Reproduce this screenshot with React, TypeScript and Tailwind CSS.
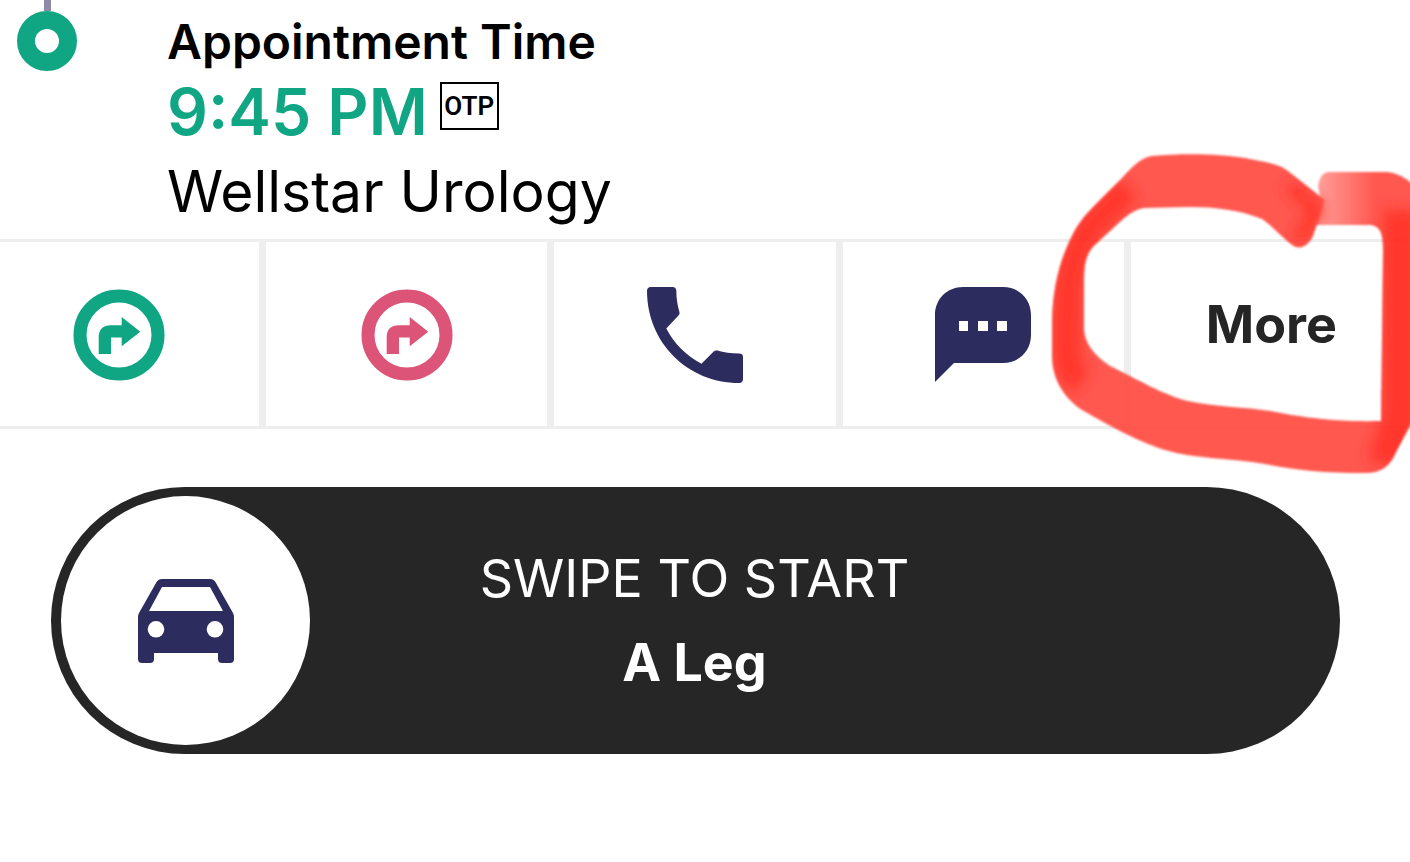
import { FC, ReactNode } from "react";

interface DirectionIconProps {
    className: string;
}

const DirectionIcon: FC<DirectionIconProps> = ({ className }) => {
    return (
        <svg
            className={className}
            viewBox="-46 -46 92 92"
            width="92"
            height="92"
            fill="currentColor"
            aria-hidden="true"
        >
            <circle r="39" fill="none" stroke="currentColor" strokeWidth="13" />
            <path d="M-20.3 19V2.5Q-20.3-9.7-8-9.7H2.7V-18L21.3-3.3 2.7 11.3V2.5H-8V19z" />
        </svg>
    );
};

const PhoneIcon = () => (
    <svg
        viewBox="3 3 18 18"
        width="96"
        height="96"
        fill="currentColor"
        aria-hidden="true"
    >
        <path d="M6.62 10.79c1.44 2.83 3.76 5.14 6.59 6.59l2.3-2.3c.17-.17.4-.24.65-.17 1.25.37 2.5.57 4.14.57.4 0 .7.2.7.6V20.3c0 .4-.3.7-.7.7C10.6 21 3 13.4 3 3.7c0-.4.3-.7.7-.7h4.1c.4 0 .7.3.7.7 0 1.4.2 2.7.57 3.95.08.3.02.5-.18.7z" />
    </svg>
);

const ChatIcon = () => (
    <svg
        viewBox="0 0 96 96"
        width="96"
        height="96"
        fill="currentColor"
        aria-hidden="true"
    >
        <path d="M0 95V28C0 12 12 0 28 0H68C84 0 96 12 96 28V48C96 64 84 76 68 76H19z" />
        <path fill="#fff" d="M24 34h9v10h-9zM43 34h10v10H43zM62 34h10v10H62z" />
    </svg>
);

const CarIcon = () => (
    <svg
        viewBox="0 0 96 84"
        width="96"
        height="84"
        fill="currentColor"
        fillRule="evenodd"
        aria-hidden="true"
    >
        <path d="M24 0H72Q76 0 78 4L95 34Q96 36 96 38V80Q96 84 92 84H84Q80 84 80 80V74H16V80Q16 84 12 84H4Q0 84 0 80V38Q0 36 1 34L18 4Q20 0 24 0zM24 8L11 32H85L72 8zM18 42a8.3 8.3 0 100 16.6 8.3 8.3 0 000-16.6zM77 42a8.3 8.3 0 100 16.6 8.3 8.3 0 000-16.6z" />
    </svg>
);

// hand drawn circle around the "More" action
const MarkerCircle = () => (
    <svg
        className="pointer-events-none absolute top-[140px] right-0 opacity-90"
        viewBox="0 0 370 350"
        width="370"
        height="350"
        aria-hidden="true"
    >
        <defs>
            <linearGradient id="fadeIn" x1="274" x2="335" y1="0" y2="0" gradientUnits="userSpaceOnUse">
                <stop offset="0" stopColor="#ff463d" stopOpacity="0.55" />
                <stop offset="1" stopColor="#ff463d" />
            </linearGradient>
            <filter id="soft" x="-20%" y="-20%" width="140%" height="140%">
                <feGaussianBlur stdDeviation="7" />
            </filter>
            <filter id="edge">
                <feGaussianBlur stdDeviation="1" />
            </filter>
            <clipPath id="loop">
                <path d="M12 180C13 145 20 118 35 90C42 78 50 70 60 60L82 38C92 27 100 18 112 16C145 13 180 14 205 18C225 22 240 24 248 31L281 57Q285 60 283 66L273 96C269 104 263 109 256 107C248 104 233 86 222 79C200 70 175 67 150 67L105 68C95 69 88 75 82 80L57 103C45 113 44 125 44 145V190C45 202 52 214 70 226C95 238 125 256 148 261C175 267 205 267 230 271C262 277 290 282 341 281L343 110C343 92 340 85 328 85H276L282 66L278 46Q280 33 288 32L348 32Q362 34 372 44V282L356 312C350 326 342 333 325 333C285 333 255 330 225 324C190 318 155 319 125 310C95 301 60 280 42 270C20 255 12 235 12 215z" />
            </clipPath>
        </defs>
        <g filter="url(#edge)">
            <g clipPath="url(#loop)">
                <path fill="#ff463d" d="M0 0H276V53L285 60 273 98V250H380V350H0z" />
                <path fill="url(#fadeIn)" d="M276 20H380V90H274L285 60 276 53z" />
                <path fill="#ff463d" d="M335 88H380V290H335z" />
                <g fill="none" stroke="#ff2218" filter="url(#soft)">
                    <path strokeWidth="28" d="M88 48L52 85C32 110 27 140 27 180V215Q27 232 42 242" />
                    <path strokeWidth="14" d="M250 45L276 70 258 102" />
                    <path strokeWidth="36" d="M361 70V275L345 325" />
                </g>
            </g>
        </g>
    </svg>
);

interface ActionProps {
    label: string;
    children: ReactNode;
}

const Action: FC<ActionProps> = ({ label, children }) => {
    return (
        <button
            type="button"
            aria-label={label}
            className="flex h-[184px] items-center justify-center bg-white pt-[2px] text-[#2d2c5e]"
        >
            {children}
        </button>
    );
};

const App = () => {
    return (
        <main className="relative min-h-screen overflow-hidden bg-white font-['Inter',sans-serif] text-black">
            <section className="flex h-[239px] gap-[90px] pl-[17px]">
                <div className="flex w-[60px] shrink-0 flex-col items-center">
                    <div className="h-[11px] w-[7px] bg-[#8f8aa6]" />
                    <div className="size-[60px] rounded-full border-[18px] border-[#11a683]" />
                </div>
                <div className="pt-3">
                    <h1 className="text-[48px] leading-[60px] font-semibold">
                        Appointment Time
                    </h1>
                    <div className="flex items-center gap-3">
                        <time className="text-[64px] leading-[80px] font-semibold text-[#11a683]">
                            9:45 PM
                        </time>
                        <span className="mb-3 flex h-12 w-[59px] items-center justify-center border-2 border-black font-['Roboto',sans-serif] text-[26px] font-semibold">
                            OTP
                        </span>
                    </div>
                    <p className="text-[57px] leading-[80px]">
                        Wellstar Urology
                    </p>
                </div>
            </section>

            <nav
                aria-label="Trip actions"
                className="-mr-[2px] -ml-[22px] grid grid-cols-5 gap-[7px] border-y-3 border-[#eeeeee] bg-[#eeeeee]"
            >
                <Action label="Directions to pickup">
                    <DirectionIcon className="text-[#11a683]" />
                </Action>
                <Action label="Directions to drop-off">
                    <DirectionIcon className="text-[#dc5477]" />
                </Action>
                <Action label="Call">
                    <PhoneIcon />
                </Action>
                <Action label="Message">
                    <ChatIcon />
                </Action>
                <Action label="More">
                    <span className="pb-5 text-[52px] font-bold text-[#252525]">
                        More
                    </span>
                </Action>
            </nav>

            <div className="mt-[58px] mr-[70px] ml-[51px] flex items-center rounded-full bg-[#262626] py-[9px] pl-[10px] text-white">
                <button
                    type="button"
                    aria-label="Swipe to start"
                    className="flex size-[249px] shrink-0 items-center justify-center rounded-full bg-white text-[#2d2c5e]"
                >
                    <CarIcon />
                </button>
                <div className="flex-1 pr-[261px] text-center text-[52px] leading-[84px]">
                    <p>SWIPE TO START</p>
                    <p className="font-bold">A Leg</p>
                </div>
            </div>

            <MarkerCircle />
        </main>
    );
};

export default App;
